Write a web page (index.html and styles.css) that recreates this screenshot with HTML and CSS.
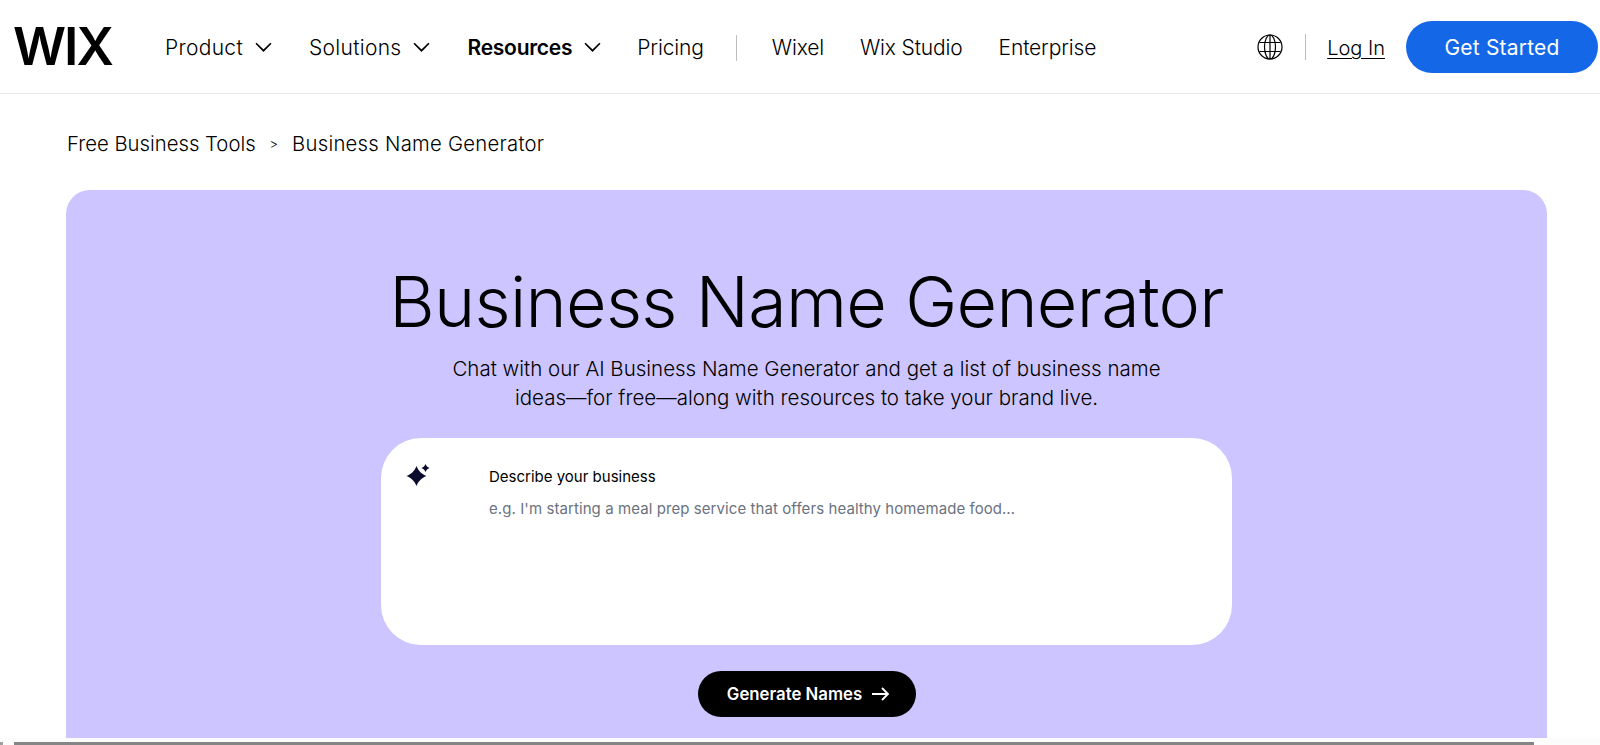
FILE: index.html
```html
<!DOCTYPE html>
<html lang="en">
<head>
    <meta charset="UTF-8">
    <meta name="viewport" content="width=device-width, initial-scale=1.0">
    <title>Business Name Generator</title>
    <link rel="stylesheet" href="styles.css">
</head>
<body>
    <header class="site-header">
        <a class="logo">WIX</a>
        <nav class="main-nav">
            <a class="nav-item has-menu">Product
                <svg class="chevron" viewBox="0 0 16 10"><path d="M1 1l7 7 7-7"/></svg>
            </a>
            <a class="nav-item has-menu">Solutions
                <svg class="chevron" viewBox="0 0 16 10"><path d="M1 1l7 7 7-7"/></svg>
            </a>
            <a class="nav-item has-menu active">Resources
                <svg class="chevron" viewBox="0 0 16 10"><path d="M1 1l7 7 7-7"/></svg>
            </a>
            <a class="nav-item">Pricing</a>
            <span class="divider"></span>
            <a class="nav-item">Wixel</a>
            <a class="nav-item">Wix Studio</a>
            <a class="nav-item">Enterprise</a>
        </nav>
        <div class="header-right">
            <svg class="globe" viewBox="0 0 26 26">
                <circle cx="13" cy="13" r="12"/>
                <ellipse cx="13" cy="13" rx="5.5" ry="12"/>
                <path d="M13 1v24M2.500 8.500h21M2.500 17.500h21"/>
            </svg>
            <span class="divider"></span>
            <a class="login">Log In</a>
            <a class="get-started">Get Started</a>
        </div>
    </header>

    <div class="breadcrumb">
        <span>Free Business Tools</span>
        <span class="crumb-sep">&gt;</span>
        <span class="crumb-current">Business Name Generator</span>
    </div>

    <main class="hero">
        <h1>Business Name Generator</h1>
        <p class="intro">Chat with our AI Business Name Generator and get a list of business name<br>ideas—for free—along with resources to take your brand live.</p>
        <div class="prompt-box">
            <svg class="sparkle" viewBox="0 0 24 24">
                <path d="M10.500 3c2 5 5 8 10 10-5 2-8 5-10 10-2-5-5-8-10-10 5-2 8-5 10-10z"/>
                <path d="M19.500 1c.7 2 2 3.300 4 4-2 .7-3.300 2-4 4-.7-2-2-3.300-4-4 2-.7 3.300-2 4-4z"/>
            </svg>
            <div class="prompt-text">
                <div class="prompt-label">Describe your business</div>
                <div class="prompt-hint">e.g. I'm starting a meal prep service that offers healthy homemade food…</div>
            </div>
        </div>
        <a class="generate-btn">Generate Names
            <svg class="arrow" viewBox="0 0 18 14"><path d="M0 7h16M10 1l6 6-6 6"/></svg>
        </a>
    </main>

    <div class="scrollbar">
        <div class="scroll-arrow"></div>
        <div class="scroll-thumb"></div>
    </div>
</body>
</html>
```

FILE: styles.css
```css
* {
    box-sizing: border-box;
}

html, body {
    height: 745px;
}

body {
    margin: 0;
    font-family: Inter, "Liberation Sans", sans-serif;
    color: #000;
    background: #fff;
    overflow: hidden;
}

.site-header {
    display: flex;
    align-items: center;
    height: 94px;
    padding-left: 13px;
    border-bottom: 1px solid #e8e8e8;
}

.logo {
    font-size: 52px;
    font-weight: 600;
    line-height: 1;
    letter-spacing: -2px;
    width: 152px;
}

.main-nav {
    display: flex;
    align-items: center;
    padding-top: 2px;
    font-size: 21px;
    font-weight: 300;
    letter-spacing: -0.15px;
    gap: 36px;
}

.nav-item {
    display: flex;
    align-items: center;
    gap: 12px;
    white-space: nowrap;
}

.nav-item.has-menu {
    margin-right: 1px;
    letter-spacing: 0.3px;
}

.nav-item.active {
    margin-right: 0;
    font-weight: 600;
    letter-spacing: -0.25px;
}

.chevron {
    width: 17px;
    height: 11px;
    fill: none;
    stroke: #000;
    stroke-width: 1.6;
}

.divider {
    display: block;
    width: 1px;
    height: 26px;
    background: #bdbdbd;
}

.main-nav .divider {
    margin: 0 -1px 0 -4px;
}

.header-right {
    display: flex;
    align-items: center;
    margin-left: auto;
    padding-right: 2px;
}

.globe {
    width: 26px;
    height: 26px;
    fill: none;
    stroke: #000;
    stroke-width: 1.2;
    margin-right: 22px;
}

.login {
    margin-left: 21px;
    padding-top: 2px;
    font-size: 20px;
    font-weight: 300;
    text-decoration: underline;
    text-decoration-thickness: 1px;
    text-underline-offset: 3px;
}

.get-started {
    display: flex;
    align-items: center;
    justify-content: center;
    width: 192px;
    height: 52px;
    margin-left: 21px;
    padding-top: 1px;
    border-radius: 26px;
    background: #1468e8;
    color: #fff;
    font-size: 21px;
    letter-spacing: 0.2px;
    font-weight: 400;
}

.breadcrumb {
    display: flex;
    align-items: center;
    height: 96px;
    padding: 3px 0 0 67px;
    font-size: 20.3px;
    font-weight: 300;
}

.crumb-sep {
    font-size: 13px;
    margin: 0 14px;
}

.crumb-current {
    letter-spacing: 0.25px;
}

.hero {
    display: flex;
    flex-direction: column;
    align-items: center;
    width: 1481px;
    height: 548px;
    margin-left: 66px;
    padding-top: 70px;
    border-radius: 24px 24px 0 0;
    background: #cdc5ff;
}

.hero h1 {
    margin: 0;
    font-size: 70px;
    font-weight: 300;
    line-height: 84px;
    letter-spacing: -0.7px;
}

.intro {
    margin: 10px 0 0;
    font-size: 20.5px;
    font-weight: 300;
    line-height: 29px;
    text-align: center;
}

.prompt-box {
    display: flex;
    width: 851px;
    height: 207px;
    margin-top: 26px;
    padding: 25px 0 0 25px;
    border-radius: 40px;
    background: #fff;
}

.sparkle {
    width: 24px;
    height: 24px;
    fill: #0b0b2b;
}

.prompt-text {
    margin-left: 59px;
    padding-top: 4px;
}

.prompt-label {
    font-size: 15px;
    line-height: 20px;
}

.prompt-hint {
    margin-top: 12px;
    font-size: 15px;
    letter-spacing: 0.08px;
    line-height: 20px;
    color: #6b7280;
}

.generate-btn {
    display: flex;
    align-items: center;
    justify-content: center;
    gap: 10px;
    width: 218px;
    height: 46px;
    margin-top: 26px;
    padding-left: 4px;
    border-radius: 23px;
    background: #000;
    color: #fff;
    font-size: 16.8px;
    font-weight: 600;
}

.arrow {
    width: 18px;
    height: 14px;
    fill: none;
    stroke: #fff;
    stroke-width: 1.8;
}

.scrollbar {
    display: flex;
    height: 7px;
    padding: 4px 66px 0 0;
    background: #fcfcfc;
}

.scroll-arrow {
    width: 3px;
    height: 3px;
    margin-right: 11px;
    background: #a0a0a0;
}

.scroll-thumb {
    flex: 1;
    height: 3px;
    background: #858585;
}
```
